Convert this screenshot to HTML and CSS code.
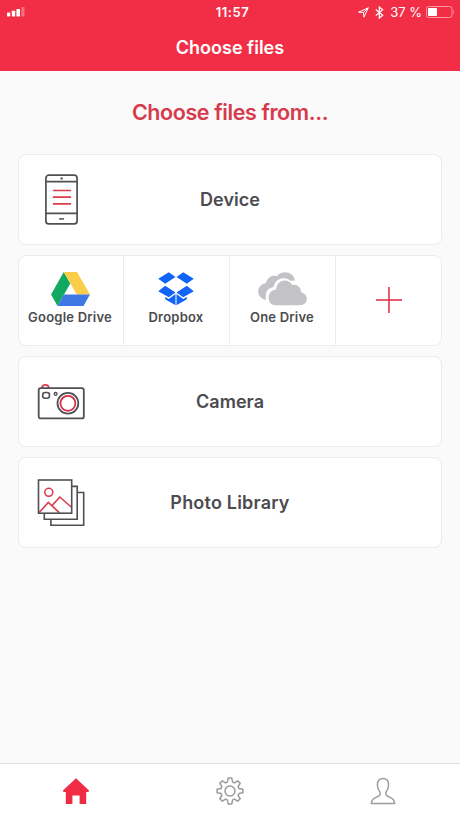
FILE: index.html
```html
<!DOCTYPE html>
<html lang="en">
<head>
<meta charset="utf-8">
<title>Choose files</title>
<link rel="stylesheet" href="styles.css">
</head>
<body>
<div class="app">
  <header class="header">
    <div class="status">
      <svg class="signal" width="18" height="10" viewBox="0 0 18 10" fill="#fff"><rect x="0" y="5.5" width="3.2" height="4" rx=".4"/><rect x="4.8" y="3.8" width="3.4" height="5.7" rx=".4"/><rect x="9.4" y="1.9" width="3.6" height="7.6" rx=".4"/><rect x="14.3" y="0" width="3.2" height="9.5" rx=".4" opacity=".3"/></svg>
      <span class="time">11:57</span>
      <div class="status-right">
        <svg width="11" height="11" viewBox="0 0 11 11" fill="none" stroke="#fff" stroke-width="1" stroke-linejoin="round"><path d="M.6 5.2 10.3.8 5.9 10.2 5.5 5.4Z"/><path d="M5.5 5.4 10.3.8"/></svg>
        <svg class="bluetooth" width="9" height="13" viewBox="0 0 9 13" fill="none" stroke="#fff" stroke-width="1.2"><path d="M.8 3.5 7.7 9.2 4.3 12V1L7.7 3.8.8 9.5"/></svg>
        <span class="percent">37 %</span>
        <svg class="battery" width="29" height="12" viewBox="0 0 29 12"><rect x=".5" y=".5" width="25.5" height="11" rx="2.2" fill="none" stroke="#fff" stroke-opacity=".5"/><rect x="2" y="2" width="9" height="8" rx=".8" fill="#fff"/><path d="M27.3 4v4c1.2-.5 1.2-3.5 0-4Z" fill="#fff" opacity=".5"/></svg>
      </div>
    </div>
    <h1 class="title">Choose files</h1>
  </header>

  <main class="content">
    <h2 class="heading">Choose files from...</h2>
    <div class="sources">
      <div class="card">
        <svg class="icon" width="48" height="52" viewBox="0 -.7 48 52" fill="none" stroke="#504f54" stroke-width="1.7"><rect x="8.9" y="1.4" width="31.2" height="48.8" rx="3"/><path d="M8.9 8h31.2M8.9 39.7h31.2"/><path d="M22.1 45.2h5" stroke-width="1.5"/><path d="M23.5 4.8h2.3" stroke-width="2"/><path d="M15.9 16.8h18.2M15.9 23.4h18.2M15.9 30.2h18.2" stroke="#da3c4f"/></svg>
        <span class="label">Device</span>
      </div>

      <div class="card clouds">
        <div class="cloud">
          <svg width="39" height="34" viewBox="0 0 39 34"><path d="M12.8 0 0 22.6 6.5 34 19.3 11.5Z" fill="#11a861"/><path d="M12.8 0H26L39 22.6H25.8Z" fill="#fccd48"/><path d="M13 22.6H39L32.5 34H6.5Z" fill="#3f77e5"/></svg>
          <span>Google Drive</span>
        </div>
        <div class="cloud">
          <svg width="36" height="34" viewBox="0 0 36 34" fill="#1264f6"><path d="M10.8.3 17.5 5 7.2 11.8.2 6.8ZM25.2.3 18.5 5l10.3 6.8 7-5ZM.2 19.2 7.2 13.7 17.5 20.4 10.8 25.3ZM35.8 19.2l-7-5.5L18.5 20.4l6.7 4.9ZM17.5 22 10.8 27 7.2 25v2.3l10.3 5.9ZM18.5 22 25.2 27l3.6-2v2.3l-10.3 5.9Z"/></svg>
          <span>Dropbox</span>
        </div>
        <div class="cloud">
          <svg width="49" height="34" viewBox="0 0 49 34" fill="#c3c2c7"><path d="M7.8 28C3 26.6.2 23.5.2 19.7c0-4.6 3.3-8.1 7.8-8.8C9.2 6.5 12.3 3.8 16 3.8c1 0 1.8.1 2.7.4C21 1.5 23.7.2 27.2.2c5 0 8.8 3.2 9.8 8.3-1.8-.3-3 0-4.2.5-2.3-1.9-4.8-2.9-7.5-2.7-5 .2-8.7 3.5-9.8 8.8-5 .9-8 4.4-7.7 8.9 0 1.4 0 2.6 0 4Z"/><path d="M17.1 33.2c-3.9 0-6.5-3.3-6.5-7.4 0-4.6 3.2-8.1 7.5-8.4.5-5.1 3.8-8.8 8.4-8.8 3.5 0 6.2 1.7 7.7 4.5 4.6-1.2 8.8 2 9 7.3 3.3.7 5.6 3 5.6 6.3 0 3.7-3 6.5-7 6.5Z"/></svg>
          <span>One Drive</span>
        </div>
        <div class="cloud add">
          <svg width="26" height="26" viewBox="0 0 26 26" stroke="#e02d43" stroke-width="1.5"><path d="M13 0v26M0 13h26"/></svg>
        </div>
      </div>

      <div class="card">
        <svg class="icon" width="48" height="52" viewBox="0 -.5 48 52" fill="none" stroke="#504f54" stroke-width="1.8"><path d="M5 12.5c.3-4.2 6.5-4.2 6.9 0" stroke="#da3c4f"/><rect x="1.7" y="12.7" width="45.1" height="30.2" rx="2"/><rect x="5.7" y="17" width="6.8" height="5.8" rx="2.5" stroke-width="1.6"/><circle cx="18.6" cy="18.4" r="1.4" stroke-width="1.3"/><circle cx="30.9" cy="27.8" r="10.4"/><circle cx="30.9" cy="27.8" r="7.5" stroke="#da2c43"/></svg>
        <span class="label">Camera</span>
      </div>

      <div class="card">
        <svg class="icon" width="48" height="52" viewBox="0 0 48 52" fill="none" stroke="#504f54" stroke-width="1.6"><path d="M34.7 9.4h5.5v32.8H7.3v-6M40.2 15.5h6.5v32.8H13.9v-6"/><path d="M2.2 35.5 11.3 25.4 22.5 35.8M15 28.6 22.8 20 34.2 30" stroke="#da3c4f"/><circle cx="11.8" cy="15.3" r="4" stroke="#da3c4f"/><rect x="1.5" y="3" width="33.2" height="33.2"/></svg>
        <span class="label library">Photo Library</span>
      </div>
    </div>
  </main>

  <nav class="tabs">
    <a class="tab"><svg width="28" height="28" viewBox="-14 -14 28 28" fill="#f02c45"><path d="M0-12.8 13.3-.2 12.2 1H10.2V13H3.6V4.4H-3.6V13H-10.2V1H-12.2L-13.3-.2Z"/></svg></a>
    <a class="tab"><svg width="28" height="28" viewBox="-14 -14 28 28" fill="none" stroke="#9b9b9d" stroke-width="1.5" stroke-linejoin="round"><path d="M-2.6-8.9-1.8-12.9H1.8L2.6-8.9 4.5-8.1 7.6-10.2 10.2-7.6 8.1-4.5 8.9-2.6 12.9-1.8V1.8L8.9 2.6 8.1 4.5 10.2 7.6 7.6 10.2 4.5 8.1 2.6 8.9 1.8 12.9H-1.8L-2.6 8.9-4.5 8.1-7.6 10.2-10.2 7.6-8.1 4.5-8.9 2.6-12.9 1.8V-1.8L-8.9-2.6-8.1-4.5-10.2-7.6-7.6-10.2-4.5-8.1Z"/><circle r="5"/></svg></a>
    <a class="tab"><svg width="28" height="28" viewBox="-14 -14 28 28" fill="none" stroke="#9b9b9d" stroke-width="1.5" stroke-linejoin="round"><path d="M0-12.4C-3.7-12.4-5.8-9.8-5.6-6.3-5.5-3.4-4.8-.8-2.9 1.2-2.3 4.5-3.7 5-6.5 6.1-10 7.5-11.5 9-11.7 12.5H11.7C11.5 9 10 7.5 6.5 6.1 3.7 5 2.3 4.5 2.9 1.2 4.8-.8 5.5-3.4 5.6-6.3 5.8-9.8 3.7-12.4 0-12.4Z"/></svg></a>
  </nav>
</div>
</body>
</html>
```

FILE: styles.css
```css
* { box-sizing: border-box; }

body {
  margin: 0;
  font-family: Inter, "Liberation Sans", sans-serif;
  color: #4c4b50;
  background: #fafafa;
}

svg { display: block; flex: none; }

.app {
  height: 818px;
  display: flex;
  flex-direction: column;
  overflow: hidden;
}

.header {
  height: 71px;
  background: #f22e46;
  color: #fff;
}

.status {
  height: 24px;
  padding: 0 5px 0 7px;
  display: grid;
  grid-template-columns: 1fr auto 1fr;
  align-items: center;
}

.time {
  padding-left: 3px;
  font-size: 13px;
  font-weight: 600;
  letter-spacing: 0.5px;
}

.status-right {
  display: flex;
  align-items: center;
  justify-content: flex-end;
}

.bluetooth { margin-left: 6px; }

.percent {
  margin: 0 4px 0 6px;
  font-size: 13px;
  white-space: nowrap;
}

.title {
  margin: 0;
  font-size: 18px;
  line-height: 47px;
  font-weight: 600;
  text-align: center;
}

.content {
  flex: 1;
  padding: 0 18px;
}

.heading {
  margin: 0;
  height: 82.5px;
  line-height: 83px;
  font-size: 21.5px;
  font-weight: 600;
  letter-spacing: -0.4px;
  text-align: center;
  color: #d63a4d;
}

.sources {
  display: grid;
  grid-auto-rows: 91px;
  row-gap: 10.2px;
}

.card {
  display: grid;
  grid-template-columns: 86px 1fr 86px;
  align-items: center;
  background: #fff;
  border: 1px solid #ececed;
  border-radius: 8px;
}

.icon { margin-left: 18px; }

.label {
  text-align: center;
  font-size: 18px;
  font-weight: 600;
  letter-spacing: 0.05px;
}

.library { letter-spacing: 0.2px; }

.clouds {
  grid-template-columns: 104px repeat(3, 1fr);
  align-items: stretch;
}

.cloud {
  padding-top: 16px;
  display: flex;
  flex-direction: column;
  align-items: center;
  gap: 3px;
  font-size: 13px;
  line-height: 16px;
  font-weight: 600;
  letter-spacing: 0.22px;
  white-space: nowrap;
}

.cloud:first-child { padding-right: 2px; }

.cloud + .cloud {
  padding-right: 1px;
  border-left: 1px solid #ececed;
}

.cloud.add {
  padding: 0;
  justify-content: center;
}

.tabs {
  height: 55px;
  display: grid;
  grid-template-columns: 152px 156px 150px;
  background: #fff;
  border-top: 1px solid #e0e0e1;
}

.tab {
  display: flex;
  align-items: center;
  justify-content: center;
}
```
